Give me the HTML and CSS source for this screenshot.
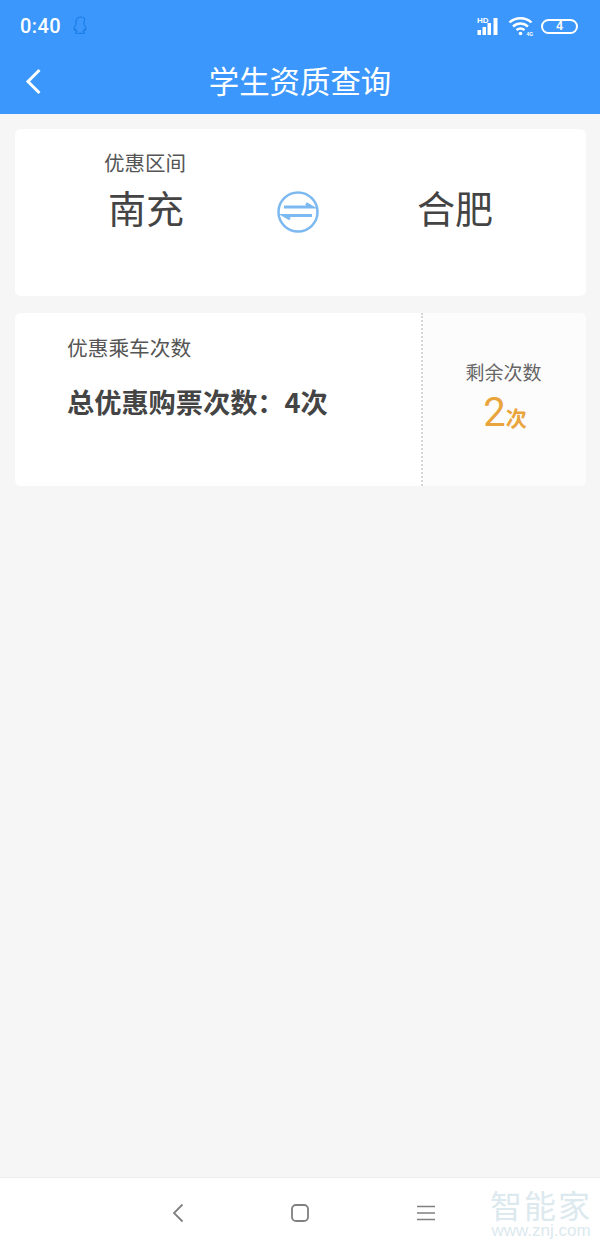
FILE: index.html
```html
<!DOCTYPE html>
<html lang="zh">
<head>
<meta charset="utf-8">
<title>学生资质查询</title>
<link rel="stylesheet" href="styles.css">
</head>
<body>
<div class="page">
  <header class="header">
    <div class="status">
      <span class="time">0:40</span>
      <svg class="qq" width="18" height="20" viewBox="0 0 18 20" fill="none" stroke="#1a7de8" stroke-width="1.2"><path d="M9 1c-3.200 0-5 2.300-5 5.200v2.300c-1.200 1.500-2 3-2 4.600 0 1 .5 1.200 1.600.4.2.9.7 1.600 1.300 2.100-1 .4-1.500.9-1.300 1.400.3.6 2.200.7 3.200.3.6-.3 1.300-.3 2.400 0 1 .4 2.900.3 3.200-.3.2-.5-.3-1-1.300-1.400.6-.5 1.100-1.200 1.300-2.100 1.100.8 1.600.6 1.600-.4 0-1.600-.8-3.100-2-4.600V6.200C14 3.300 12.200 1 9 1z"/></svg>
      <div class="status-right">
        <svg class="signal" width="23" height="20" viewBox="0 0 23 20"><text x="0" y="6.500" class="hd">HD</text><g fill="#fff"><rect x="0.500" y="14" width="3.500" height="5"/><rect x="5.500" y="11" width="3.500" height="8"/><rect x="10.500" y="7" width="3.500" height="12"/><rect x="16.500" y="2" width="4" height="17"/></g></svg>
        <svg class="wifi" width="26" height="20" viewBox="0 0 26 20" fill="none" stroke="#fff" stroke-width="2.400"><path d="M1.500 6.500C7.500 .8 17.500 .8 23.500 6.500"/><path d="M5 10.500c4.500-4 10.500-4 15 0"/><path d="M8.500 14c2.500-2 5.500-2 8 0"/><circle cx="12.500" cy="17.500" r="1.800" fill="#fff" stroke="none"/><text x="18.500" y="19.500" class="net">4G</text></svg>
        <div class="battery"><span>4</span></div>
      </div>
    </div>
    <div class="titlebar">
      <svg class="back" width="20" height="28" viewBox="0 0 20 28" fill="none" stroke="#fff" stroke-width="3"><path d="M17.500 3 6 14.500 17.500 26"/></svg>
      <h1 class="title">学生资质查询</h1>
    </div>
  </header>

  <main class="content">
    <section class="card route">
      <div class="route-label">优惠区间</div>
      <div class="route-row">
        <span class="city">南充</span>
        <svg class="swap" width="42" height="42" viewBox="0 0 42 42" fill="none" stroke="#7cb9f0"><circle cx="21" cy="21" r="19.500" stroke-width="2.500"/><path d="M7 16h28L29 12.500M35 24.500H7l6 3.500" stroke-width="3"/></svg>
        <span class="city">合肥</span>
      </div>
    </section>

    <section class="card rides">
      <div class="rides-main">
        <div class="rides-label">优惠乘车次数</div>
        <div class="rides-total">总优惠购票次数：4次</div>
      </div>
      <div class="rides-side">
        <div class="side-label">剩余次数</div>
        <div class="side-value"><span class="num">2</span><span class="unit">次</span></div>
      </div>
    </section>
  </main>

  <footer class="navbar">
    <svg class="nav-back" width="12" height="20" viewBox="0 0 12 20" fill="none" stroke="#808080" stroke-width="1.800"><path d="M10.500 1.500 2 10l8.500 8.500"/></svg>
    <svg class="nav-home" width="18" height="18" viewBox="0 0 18 18" fill="none" stroke="#808080" stroke-width="1.800"><rect x="1" y="1" width="16" height="16" rx="4"/></svg>
    <svg class="nav-menu" width="18" height="16" viewBox="0 0 18 16" fill="none" stroke="#808080" stroke-width="1.500"><path d="M0 1.500h18M0 8h18M0 14.500h18"/></svg>
    <div class="watermark">
      <div class="wm-cn">智能家</div>
      <div class="wm-en">www.znj.com</div>
    </div>
  </footer>
</div>
</body>
</html>
```
FILE: styles.css
```css
* { box-sizing: border-box; margin: 0; padding: 0; }
html, body { width: 600px; height: 1249px; overflow: hidden; }
body { font-family: "Noto Sans CJK SC", "Liberation Sans", sans-serif; background: #f6f6f6; }
.page { display: flex; flex-direction: column; height: 1249px; }

.header { height: 114px; background: #3b97fb; color: #fff; }
.status { height: 52px; display: flex; align-items: center; padding: 0 22px 0 20px; }
.time { font-family: Roboto, "Liberation Sans", sans-serif; font-size: 20px; font-weight: 500; letter-spacing: 0.4px; }
.qq { margin-left: 11px; }
.status-right { margin-left: auto; display: flex; align-items: center; gap: 7px; }
.signal { margin-right: 1px; }
.hd { font: 700 8px "Liberation Sans", sans-serif; fill: #fff; }
.net { font: 700 5px "Liberation Sans", sans-serif; fill: #fff; stroke: none; }
.battery { width: 37px; height: 15px; border: 2px solid #fff; border-radius: 8px; display: flex; align-items: center; justify-content: center; }
.battery span { font: 700 12px "Liberation Sans", sans-serif; color: #fff; }

.titlebar { height: 62px; display: flex; align-items: center; justify-content: center; position: relative; }
.back { position: absolute; left: 22px; top: 15px; }
.title { font-size: 30.400px; font-weight: 400; line-height: 1; margin-top: -6px; }

.content { flex: 1; padding: 15px 14px 0 15px; display: flex; flex-direction: column; gap: 17px; }
.card { background: #fff; border-radius: 6px; }

.route { height: 167px; padding-top: 20px; }
.route-label { margin-left: 89px; font-size: 20.500px; line-height: 26px; color: #555; }
.route-row { display: flex; align-items: center; margin-top: 6px; }
.city { font-size: 38px; line-height: 44px; color: #444; width: 76px; }
.city:first-child { margin-left: 93px; }
.swap { margin-left: 93px; margin-top: 10px; }
.city:last-child { margin-left: 98px; }

.rides { height: 173px; display: flex; overflow: hidden; }
.rides-main { width: 408px; padding: 20px 0 0 52px; border-right: 2px dotted #d5d5d5; }
.rides-label { font-size: 20.700px; line-height: 28px; color: #555; }
.rides-total { margin-top: 22px; font-size: 27.200px; line-height: 36px; font-weight: 700; color: #444; white-space: nowrap; }
.rides-side { flex: 1; background: #fcfcfc; display: flex; flex-direction: column; align-items: center; padding-top: 46px; padding-right: 2px; }
.side-label { font-size: 19px; line-height: 26px; color: #666; }
.side-value { display: flex; align-items: baseline; color: #e9a53c; line-height: 46px; margin-top: 5px; margin-left: 3px; }
.num { font-family: Roboto, "Liberation Sans", sans-serif; font-size: 40px; font-weight: 400; }
.unit { font-size: 21px; font-weight: 700; }

.navbar { height: 72px; background: #fff; border-top: 1px solid #ececec; position: relative; display: flex; align-items: center; }
.nav-back { margin-left: 172px; margin-top: -1px; }
.nav-home { margin-left: 107px; margin-top: -1px; }
.nav-menu { margin-left: 108px; margin-top: -1px; }
.watermark { position: absolute; left: 490px; top: 9px; width: 102px; text-align: center; }
.wm-cn { font-size: 32px; line-height: 34px; letter-spacing: 2px; color: #dce9ee; white-space: nowrap; }
.wm-en { font-family: "Liberation Sans", sans-serif; font-size: 17px; line-height: 20px; color: #dce9ee; white-space: nowrap; }
```
